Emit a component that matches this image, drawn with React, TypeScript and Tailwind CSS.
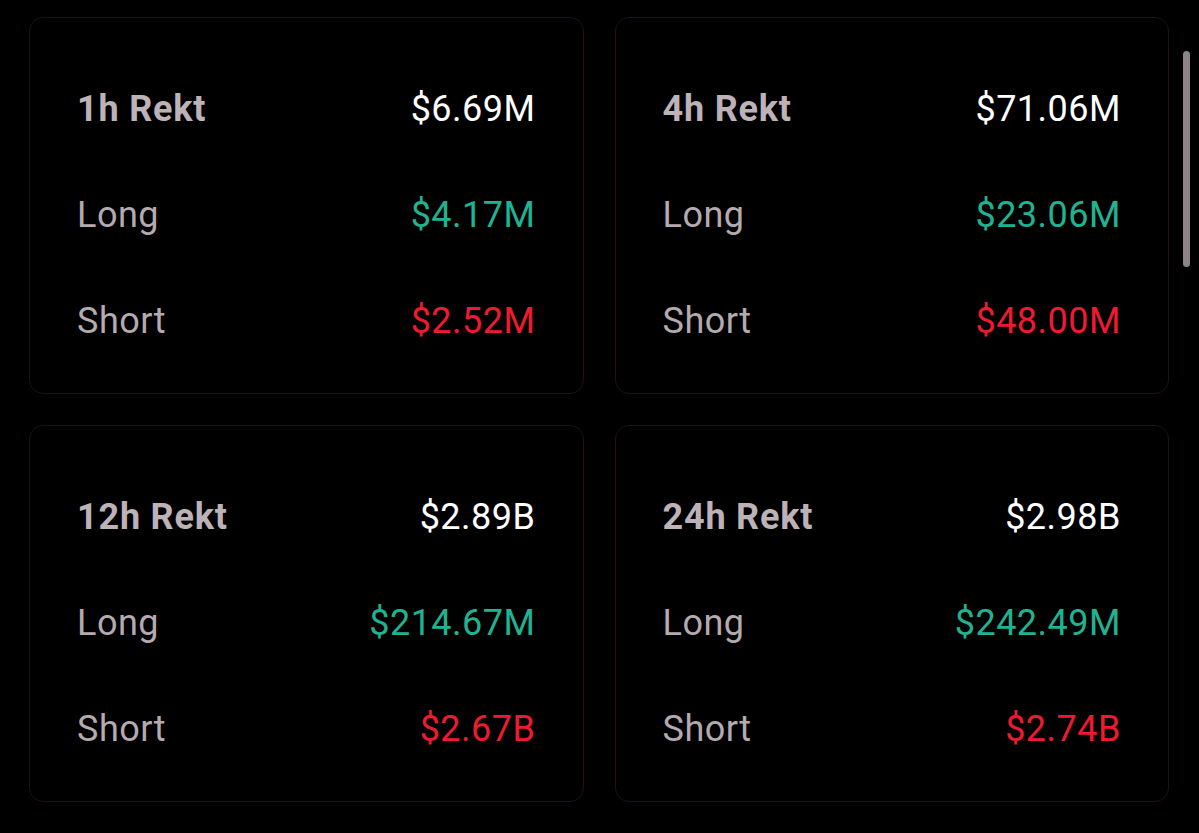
import React from "react";

type Card = { title: string; total: string; long: string; short: string };

const cards: Card[] = [
  { title: "1h Rekt", total: "$6.69M", long: "$4.17M", short: "$2.52M" },
  { title: "4h Rekt", total: "$71.06M", long: "$23.06M", short: "$48.00M" },
  { title: "12h Rekt", total: "$2.89B", long: "$214.67M", short: "$2.67B" },
  { title: "24h Rekt", total: "$2.98B", long: "$242.49M", short: "$2.74B" },
];

function RektCard({ c }: { c: Card }) {
  return (
    <div className="h-[377px] rounded-[14px] border border-[#1f0f1f] bg-black pl-[47px] pr-[47px] pt-[38px]">
      <div className="flex h-[106px] items-center justify-between">
        <span className="text-[36px] font-bold tracking-[0.8px] text-[#bdb2b7]">{c.title}</span>
        <span className="text-[36px] tracking-[0.5px] text-white">{c.total}</span>
      </div>
      <div className="flex h-[106px] items-center justify-between">
        <span className="text-[36px] tracking-[0.5px] text-[#b4aaaf]">Long</span>
        <span className="text-[36px] tracking-[0.5px] text-[#20b392]">{c.long}</span>
      </div>
      <div className="flex h-[106px] items-center justify-between">
        <span className="text-[36px] tracking-[0.5px] text-[#b4aaaf]">Short</span>
        <span className="text-[36px] tracking-[0.5px] text-[#ee1b30]">{c.short}</span>
      </div>
    </div>
  );
}

export default function App() {
  return (
    <div
      className="relative h-[833px] w-[1199px] overflow-hidden bg-black pl-[29px] pr-[30px] pt-[17px]"
      style={{ fontFamily: "Roboto, 'Liberation Sans', sans-serif" }}
    >
      <div className="grid grid-cols-2 gap-x-[31px] gap-y-[31px]">
        {cards.map((c) => (
          <RektCard key={c.title} c={c} />
        ))}
      </div>
      <div className="absolute left-[1183px] top-[51px] h-[216px] w-[7px] rounded-full bg-[#8d8288]" />
    </div>
  );
}
